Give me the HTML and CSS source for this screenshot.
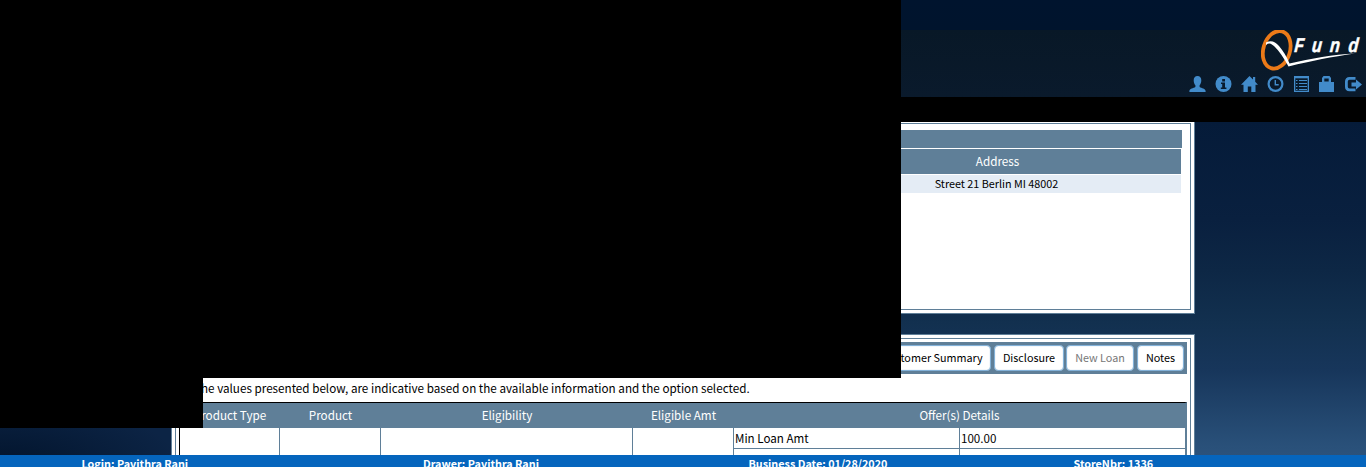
FILE: index.html
```html
<!DOCTYPE html>
<html lang="en">
<head>
<meta charset="utf-8">
<title>QFund</title>
<link rel="stylesheet" href="styles.css">
</head>
<body>
<div class="app">
  <header class="header">
    <svg class="logo" width="105" height="41" viewBox="0 0 105 41">
      <ellipse cx="15.700" cy="19.800" rx="13.300" ry="19.200" transform="rotate(17 15.700 19.800)" fill="none" stroke="#ec7a18" stroke-width="3.8"/>
      <path d="M5 12.6C10 10 14 11.500 18 16C22 21 25.500 26 28.500 33.500C50 28.500 72 24.500 94 23.500C70 27 52 30.500 27.500 36.500C23 28 18 21 13.500 16.500C10.500 13.500 8 12.500 5 15Z" fill="#fff"/>
      <g class="logo-text" transform="skewX(-5)">
        <text x="35" y="22" textLength="9.500" lengthAdjust="spacingAndGlyphs">F</text>
        <text x="52.500" y="22" textLength="10" lengthAdjust="spacingAndGlyphs">u</text>
        <text x="70.500" y="22" textLength="10" lengthAdjust="spacingAndGlyphs">n</text>
        <text x="89" y="22" textLength="10" lengthAdjust="spacingAndGlyphs">d</text>
      </g>
    </svg>
    <nav class="icons">
      <svg viewBox="0 0 17 16"><path d="M8.500 0C11 0 12.300 1.800 12.300 4.200C12.300 6.500 11.400 8.300 10.600 9.300V11C12.500 12.200 16.600 12.600 16.600 15V16H.4V15C.4 12.600 4.500 12.200 6.400 11V9.300C5.500 8.300 4.700 6.500 4.700 4.200C4.700 1.800 6 0 8.500 0Z"/></svg>
      <svg viewBox="0 0 17 16"><circle cx="8.500" cy="8" r="8"/><path class="cut" d="M7.200 3H10V5.400H7.200ZM6 6.500H10V11.500H11.400V13H5.800V11.500H7.200V8H6Z"/></svg>
      <svg viewBox="0 0 17 16"><path d="M8.500 0L12 3.500V1H14.200V5.700L17 8.700H14.500V16H10.300V10.500H6.800V16H2.500V8.700H0Z"/></svg>
      <svg viewBox="0 0 17 16"><circle class="line" cx="8.500" cy="8" r="6.900"/><path class="thin" d="M8.300 4V8.700H11.700"/></svg>
      <svg viewBox="0 0 17 16"><path d="M1 0H16V16H1Z"/><path class="cut" d="M2.300 2.300H14.700V14.700H2.300Z"/><path class="rows" d="M3 4.500H4.500M6 4.500H14M3 7.500H4.500M6 7.500H14M3 10.500H4.500M6 10.500H14M3 13.500H4.500M6 13.500H14"/></svg>
      <svg viewBox="0 0 17 16"><path d="M1 6H4V2L5.500 0H11.500L13 2V6H16V16H1Z"/><path class="cut" d="M6.300 2.500H10.700V5.500H6.300Z"/></svg>
      <svg viewBox="0 0 17 16"><path class="exit" d="M10.500 2.400H4.500Q1.400 2.400 1.400 5.400V10.800Q1.400 13.800 4.500 13.800H10.500"/><path d="M6.500 6.500H11V3.500L17 8.500L11 13.500V10.500H6.500Z"/></svg>
    </nav>
  </header>
  <div class="menu"></div>
  <main class="content">
    <section class="panel customer">
      <div class="inner">
        <div class="title"></div>
        <div class="customer-head"><span>Address</span></div>
        <div class="customer-row"><span>Street 21 Berlin MI 48002</span></div>
      </div>
    </section>
    <section class="panel loan">
      <div class="inner">
        <div class="toolbar">
          <button class="b1">Customer Summary</button>
          <button class="b2">Disclosure</button>
          <button class="b3" disabled>New Loan</button>
          <button class="b4">Notes</button>
        </div>
        <p class="note"><span>The values presented below, are indicative based on the available information and the option selected.</span></p>
        <div class="offers">
          <div class="offer-head"><span>Product Type</span><span>Product</span><span>Eligibility</span><span>Eligible Amt</span><span>Offer(s) Details</span></div>
          <div class="offer-row"><div></div><div></div><div></div><div></div>
            <div class="details"><span>Min Loan Amt</span><span>100.00</span><span></span><span></span></div>
          </div>
        </div>
      </div>
    </section>
  </main>
  <footer class="status"><span>Login: Pavithra Rani</span><span>Drawer: Pavithra Rani</span><span>Business Date: 01/28/2020</span><span>StoreNbr: 1336</span></footer>
  <div class="mask mask-large"></div>
  <div class="mask mask-small"></div>
</div>
</body>
</html>
```
FILE: styles.css
```css
* { box-sizing: border-box; }
body { margin: 0; overflow: hidden; font-family: "Noto Sans CJK SC", "Noto Sans CJK JP", sans-serif; font-size: 11.6px; color: #000; }
.app { position: relative; width: 1366px; height: 467px; overflow: hidden; display: flex; flex-direction: column; background: radial-gradient(ellipse 180px 70px at 0 467px, #02142c, transparent), linear-gradient(90deg, #0c2445 0, #0c2445 171px, transparent 172px), linear-gradient(#051b39 122px, #09203f 220px, #0d2745 270px, #12304f 322px, #17365b 370px, #295079 445px, #2d547d 467px); }
.header { height: 97px; flex: none; padding: 30px 4px 0 0; display: flex; flex-direction: column; align-items: flex-end; background: linear-gradient(#00142e 0, #00142d 30px, #081827 30px, #0a1a2c 97px); }
.logo { margin-right: -4px; overflow: hidden; }
.logo-text { fill: #fff; stroke: #fff; stroke-width: .5px; font: italic bold 20px "Liberation Sans Narrow", "Liberation Sans", sans-serif; }
.icons { display: grid; grid-template-columns: 26px 26px 26px 26px 25px 27px 17px; margin-top: 5px; }
.icons svg { width: 17px; height: 16px; fill: #428bca; }
.icons .cut { fill: #081a2c; }
.icons .line { fill: none; stroke: #428bca; stroke-width: 2.2; }
.icons .thin { fill: none; stroke: #428bca; stroke-width: 1.4; }
.icons .rows { stroke: #428bca; stroke-width: 1.1; }
.icons .exit { fill: none; stroke: #428bca; stroke-width: 2.8; }
.menu { height: 22px; flex: none; background: #000; box-shadow: 0 3px #000; position: relative; }
.content { height: 336px; flex: none; overflow: hidden; padding-left: 171px; }
.panel { width: 1024px; padding: 3px; border: 1px solid #5f7f98; background: #fff; }
.inner { border: 1px solid #5f7f98; height: 100%; }
.customer { height: 195px; }
.customer .inner { padding: 6px 8px 0 4px; }
.title { height: 18px; background: #5f7f98; }
.customer-head, .customer-row { margin: 1px 1px 0 0; display: flex; justify-content: flex-end; text-align: center; }
.customer-head { height: 25px; line-height: 23px; background: #5f7f98; color: #fff; font-size: 11.7px; }
.customer-head span { width: 367px; }
.customer-row { height: 18px; line-height: 16px; background: #e4ecf5; font-size: 10.8px; }
.customer-row span { width: 369px; }
.loan { height: 150px; margin-top: 20px; }
.loan .inner { padding: 3px; }
.toolbar { height: 32px; background: #5f7f98; padding: 3px 3px 3px 0; display: flex; justify-content: flex-end; }
.toolbar button { height: 26px; border: 1px solid #82b1d8; box-shadow: inset 0 0 1px #82b1d8; border-radius: 4px; background: #fff; color: #000; font: inherit; font-size: 10.8px; line-height: 20px; padding: 0 0 3px; white-space: nowrap; }
.toolbar button:disabled { color: #777; }
.b1 { width: 117px; }
.b2 { width: 70px; margin-left: 3px; }
.b3 { width: 68px; margin-left: 2px; }
.b4 { width: 47px; margin-left: 3px; }
.note { margin: 0; height: 28px; line-height: 27px; padding-left: 15px; font-size: 11.68px; white-space: nowrap; }
.offers { border-top: 1px solid #000; border-left: 1px solid #000; border-right: 2px solid #5f7f98; height: 70px; }
.offer-head, .offer-row { display: grid; grid-template-columns: 100px 101px 252px 101px 1fr; }
.offer-head { height: 25px; line-height: 23px; background: #5f7f98; color: #fff; text-align: center; font-size: 11.7px; }
.offer-row { height: 44px; }
.offer-row > div { border-right: 1px solid #5f7f98; }
.offer-row > .details { border-right: 0; display: grid; grid-template-columns: 226px 1fr; grid-template-rows: 21px 20px; }
.details span { line-height: 21px; padding-left: 1px; border-bottom: 1px solid #5f7f98; }
.details span:nth-child(odd) { border-right: 1px solid #5f7f98; }
.status { height: 12px; flex: none; overflow: hidden; display: grid; grid-template-columns: 341.5px 325.500px 325px 1fr; padding-left: 81.5px; background: #0565bd; color: #fff; font-size: 10.8px; font-weight: bold; line-height: 16px; }
.mask { position: absolute; background: #000; left: 0; }
.mask-large { top: 0; width: 901px; height: 378px; }
.mask-small { top: 378px; width: 203px; height: 50px; }
```
